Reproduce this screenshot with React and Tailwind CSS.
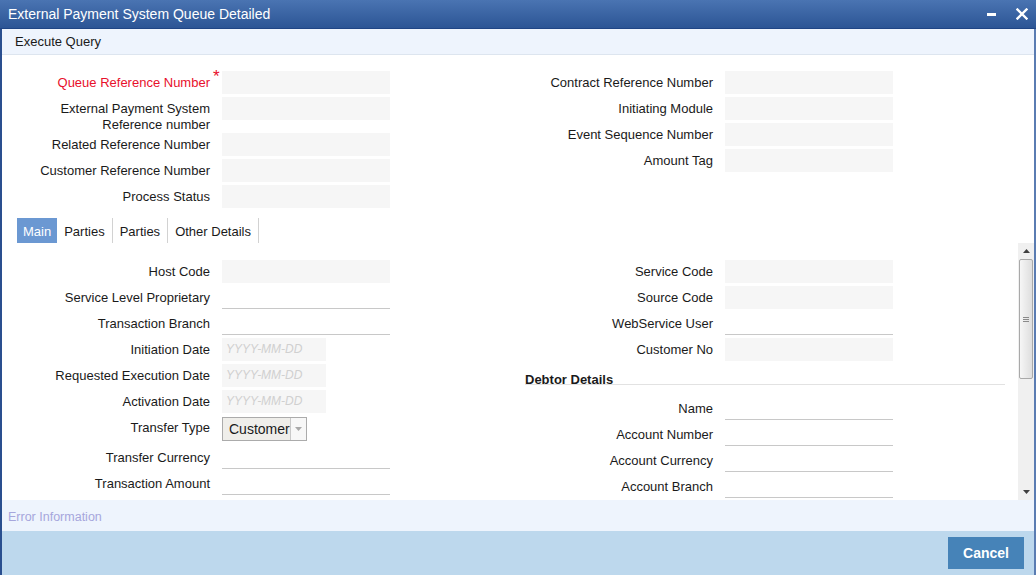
import React from "react";

const font = { fontFamily: '"Liberation Sans", Arial, sans-serif' };

function Label({ children, red }) {
  return (
    <div
      className={
        "w-[208px] shrink-0 text-right pt-[5px] text-[13px] leading-[16px] " +
        (red ? "text-[#e8102c]" : "text-[#1a1a1a]")
      }
    >
      {children}
    </div>
  );
}

function GrayBox({ w = "w-[168px]" }) {
  return <div className={"mt-[1px] h-[23px] bg-[#f6f6f6] " + w}></div>;
}

function LineBox() {
  return <div className="mt-[1px] h-[23px] w-[168px] border-b border-[#c8c8c8]"></div>;
}

function DateBox() {
  return (
    <div className="mt-[1px] h-[23px] w-[104px] bg-[#f6f6f6] pl-[4px] text-[12px] italic leading-[22px] text-[#d0d0d0]">
      YYYY-MM-DD
    </div>
  );
}

function Row({ label, red, children, h = "h-[26px]" }) {
  return (
    <div className={"flex items-start gap-[12px] " + h}>
      <Label red={red}>{label}</Label>
      {children}
    </div>
  );
}

function Tab({ children, active }) {
  return (
    <div
      className={
        "h-[25px] flex items-center pt-[2px] text-[13px] " +
        (active
          ? "bg-[#6b98d2] text-white px-[6px]"
          : "text-[#1a1a1a] px-[7px] border-r border-[#d2d2d2]")
      }
    >
      {children}
    </div>
  );
}

export default function App() {
  return (
    <div className="w-[1036px] h-[575px] overflow-hidden flex flex-col bg-white" style={font}>
      {/* Title bar */}
      <div className="h-[29px] shrink-0 flex items-center justify-between bg-gradient-to-b from-[#4a74b2] to-[#2c5595] border-b border-[#1f4585] pl-[8px] pr-[8px]">
        <div className="text-white text-[14px] leading-none">External Payment System Queue Detailed</div>
        <div className="flex items-center gap-[20px]">
          <div className="w-[9px] h-[3px] bg-white mt-[1px]"></div>
          <svg width="12" height="12" viewBox="0 0 12 12">
            <path d="M1.5 1.5 L10.5 10.5 M10.5 1.5 L1.5 10.5" stroke="white" strokeWidth="2.4" strokeLinecap="square" />
          </svg>
        </div>
      </div>

      {/* Body */}
      <div className="flex-1 flex flex-col border-l-2 border-r-2 border-l-[#2a4f8f] border-r-[#5a7cb2] min-h-0">
        {/* Execute Query bar */}
        <div className="h-[26px] shrink-0 bg-[#eef4fd] border-b border-[#dde5ef] pl-[13px] pt-[1px] flex items-center text-[13px] text-[#1a1a1a]">
          Execute Query
        </div>

        {/* Header fields */}
        <div className="shrink-0 flex pt-[15px]">
          <div className="w-[503px] flex flex-col">
            <Row label={<>Queue Reference Number</>} red>
              <div className="relative">
                <span className="absolute left-[-9px] top-[-1px] text-[#e8102c] text-[17px] leading-[16px]">*</span>
                <GrayBox />
              </div>
            </Row>
            <Row label={<>External Payment System<br />Reference number</>} h="h-[36px]">
              <GrayBox />
            </Row>
            <Row label="Related Reference Number">
              <GrayBox />
            </Row>
            <Row label="Customer Reference Number">
              <GrayBox />
            </Row>
            <Row label="Process Status">
              <GrayBox />
            </Row>
          </div>
          <div className="flex flex-col">
            <Row label="Contract Reference Number">
              <GrayBox />
            </Row>
            <Row label="Initiating Module">
              <GrayBox />
            </Row>
            <Row label="Event Sequence Number">
              <GrayBox />
            </Row>
            <Row label="Amount Tag">
              <GrayBox />
            </Row>
          </div>
        </div>

        {/* Tabs */}
        <div className="shrink-0 mt-[8px] pl-[15px] flex h-[25px]">
          <Tab active>Main</Tab>
          <Tab>Parties</Tab>
          <Tab>Parties</Tab>
          <Tab>Other Details</Tab>
        </div>

        {/* Scroll area */}
        <div className="h-[257px] shrink-0 flex">
          <div className="flex-1 overflow-hidden flex pt-[16px]">
            <div className="w-[503px] flex flex-col shrink-0">
              <Row label="Host Code"><GrayBox /></Row>
              <Row label="Service Level Proprietary"><LineBox /></Row>
              <Row label="Transaction Branch"><LineBox /></Row>
              <Row label="Initiation Date"><DateBox /></Row>
              <Row label="Requested Execution Date"><DateBox /></Row>
              <Row label="Activation Date"><DateBox /></Row>
              <Row label="Transfer Type" h="h-[30px]">
                <div className="mt-[2px] h-[24px] w-[85px] flex border border-[#ababab] bg-[#efeeea]">
                  <div className="flex-1 pl-[6px] text-[14px] leading-[22px] text-[#1a1a1a]">Customer</div>
                  <div className="w-[18px] border-l border-[#c8c8c8] bg-[#f7f7f7] flex items-center justify-center">
                    <svg width="7" height="4" viewBox="0 0 7 4"><path d="M0 0 L7 0 L3.5 4 Z" fill="#a8a8a8" /></svg>
                  </div>
                </div>
              </Row>
              <Row label="Transfer Currency"><LineBox /></Row>
              <Row label="Transaction Amount"><LineBox /></Row>
            </div>
            <div className="flex flex-col">
              <Row label="Service Code"><GrayBox /></Row>
              <Row label="Source Code"><GrayBox /></Row>
              <Row label="WebService User"><LineBox /></Row>
              <Row label="Customer No"><GrayBox /></Row>
              <div className="mt-[8px] ml-[20px] w-[480px] h-[14px] border-b border-[#e2e2e2] text-[13px] font-bold leading-[18px] text-[#1a1a1a]">
                Debtor Details
              </div>
              <div className="mt-[11px] flex flex-col">
                <Row label="Name"><LineBox /></Row>
                <Row label="Account Number"><LineBox /></Row>
                <Row label="Account Currency"><LineBox /></Row>
                <Row label="Account Branch"><LineBox /></Row>
              </div>
            </div>
          </div>
          {/* Scrollbar */}
          <div className="w-[16px] shrink-0 bg-[#f0f0f0] flex flex-col">
            <div className="h-[16px] flex items-center justify-center">
              <svg width="7" height="4" viewBox="0 0 7 4"><path d="M0 4 L7 4 L3.5 0 Z" fill="#404040" /></svg>
            </div>
            <div className="h-[120px] mx-[1px] rounded-[2px] border border-[#a9a9a9] bg-gradient-to-r from-[#f6f6f6] to-[#dedede] flex items-center justify-center">
              <div className="flex flex-col gap-[1px]">
                <div className="w-[6px] h-[1px] bg-[#8a8a8a]"></div>
                <div className="w-[6px] h-[1px] bg-[#8a8a8a]"></div>
                <div className="w-[6px] h-[1px] bg-[#8a8a8a]"></div>
              </div>
            </div>
            <div className="flex-1"></div>
            <div className="h-[16px] flex items-center justify-center">
              <svg width="7" height="4" viewBox="0 0 7 4"><path d="M0 0 L7 0 L3.5 4 Z" fill="#404040" /></svg>
            </div>
          </div>
        </div>

        {/* Error info */}
        <div className="h-[31px] shrink-0 bg-[#eef4fd] pl-[6px] pt-[3px] flex items-center text-[12.5px] text-[#a6a6dc]">
          Error Information
        </div>

        {/* Footer */}
        <div className="flex-1 bg-[#bdd8ed] flex justify-end items-start pt-[6px] pr-[10px]">
          <div className="w-[76px] h-[32px] bg-[#4683b8] text-white font-bold text-[14px] flex items-center justify-center">
            Cancel
          </div>
        </div>
      </div>
    </div>
  );
}
